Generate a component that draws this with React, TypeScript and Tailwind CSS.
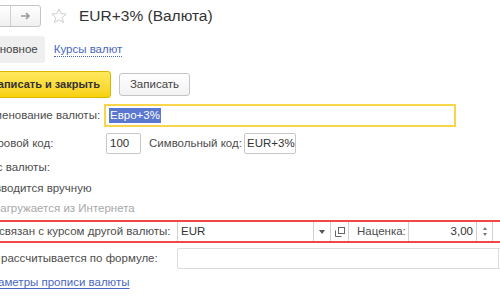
import React from "react";

const font = { fontFamily: '"Liberation Sans", Arial, sans-serif' };

export default function App() {
  return (
    <div className="w-[500px] h-[300px] overflow-hidden bg-white relative text-[11.5px] text-[#4d4d4d] whitespace-nowrap" style={font}>
      <div className="ml-[-20px] w-[540px] flex flex-col">
        {/* title row */}
        <div className="h-[31px] flex items-center pt-[1px]">
          <div className="flex shrink-0 h-[22px] border border-[#c4c4c4] rounded-[3px] bg-gradient-to-b from-white to-[#f0f0f0]">
            <div className="w-[30px] border-r border-[#d0d0d0] flex items-center justify-center text-[#b0b0b0]">←</div>
            <div className="w-[29px] flex items-center justify-center">
              <svg width="12" height="10" viewBox="0 0 12 10">
                <path d="M1 5h8M6 2l3 3-3 3" stroke="#9a9a9a" strokeWidth="1.6" fill="none" />
              </svg>
            </div>
          </div>
          <svg className="ml-[9px] shrink-0" width="18" height="18" viewBox="0 0 24 24">
            <path d="M12 2.5l2.9 6.2 6.6.7-5 4.5 1.4 6.6L12 17.2l-5.9 3.3 1.4-6.6-5-4.5 6.6-.7z" fill="none" stroke="#c8c8c8" strokeWidth="1.2" strokeLinejoin="round" />
          </svg>
          <div className="ml-[11px] text-[15.5px] text-[#333]">EUR+3% (Валюта)</div>
        </div>
        {/* tabs */}
        <div className="mt-[5px] h-[27px] flex items-center">
          <div className="h-[27px] bg-[#efefef] rounded-[3px] pl-[5px] pr-[7px] flex items-center text-[#444]">Основное</div>
          <div className="ml-[9px] text-[#4a67c0] border-b border-dotted border-[#4a67c0] leading-[14px]">Курсы валют</div>
        </div>
        {/* buttons */}
        <div className="mt-[8px] flex items-center h-[27px]">
          <div className="shrink-0 h-[27px] w-[131px] rounded-[3px] border border-[#d9b700] bg-gradient-to-b from-[#ffe95c] to-[#f7d100] flex items-center justify-end pr-[10px] text-[#333] font-bold text-[11px]">Записать и закрыть</div>
          <div className="shrink-0 ml-[8px] h-[23px] w-[71px] rounded-[3px] border border-[#c4c4c4] bg-gradient-to-b from-white to-[#f2f2f2] flex items-center justify-center text-[#444]">Записать</div>
        </div>
        {/* name */}
        <div className="mt-[6px] flex items-center h-[23px] ml-[-7px]">
          <div className="w-[131px] shrink-0">Наименование валюты:</div>
          <div className="shrink-0 w-[352px] h-[23px] border-2 border-[#f9d548] flex items-center pl-[3px]">
            <span className="bg-[#5a78d0] text-white px-[1px] leading-[15px]">Евро+3%</span>
          </div>
        </div>
        {/* codes */}
        <div className="mt-[6px] flex items-center h-[21px] ml-[-7px]">
          <div className="w-[133px] shrink-0">Цифровой код:</div>
          <div className="shrink-0 w-[35px] h-[21px] border border-[#c8c8c8] rounded-[2px] flex items-center pl-[3px] text-[#333]">100</div>
          <div className="shrink-0 ml-[8px] w-[95px]">Символьный код:</div>
          <div className="shrink-0 w-[52px] h-[21px] border border-[#c8c8c8] rounded-[2px] flex items-center pl-[2px] text-[#333]">EUR+3%</div>
        </div>
        {/* rate */}
        <div className="mt-[5px] h-[18px] flex items-center ml-[-2px]">Курс валюты:</div>
        <div className="mt-[2px] h-[20px] flex items-center pl-[15px]">вводится вручную</div>
        <div className="h-[20px] flex items-center pl-[15px] text-[#a8a8a8]">загружается из Интернета</div>
        <div className="mt-[1px] h-[23px] flex items-center border-y-2 border-[#f04848]">
          <div className="w-[197px] shrink-0 pl-[19px]">связан с курсом другой валюты:</div>
          <div className="flex shrink-0 h-[19px] items-stretch">
            <div className="w-[136px] border-l border-[#d0d0d0] flex items-center pl-[3px] text-[#333]">EUR</div>
            <div className="w-[17px] border-l border-[#d0d0d0] flex items-center justify-center">
              <svg width="6" height="4" viewBox="0 0 6 4"><path d="M0 0h6L3 4z" fill="#555" /></svg>
            </div>
            <div className="w-[18px] border-l border-[#d0d0d0] flex items-center justify-center">
              <svg width="10" height="10" viewBox="0 0 10 10">
                <rect x="3.5" y="0.5" width="6" height="6" fill="none" stroke="#666" />
                <path d="M0.5 3.5v6h6" fill="none" stroke="#666" />
              </svg>
            </div>
            <div className="w-[60px] border-l border-[#d0d0d0] flex items-center pl-[8px]">Наценка:</div>
            <div className="w-[68px] border-l border-[#d0d0d0] flex items-center justify-end pr-[3px] text-[#333]">3,00</div>
            <div className="w-[17px] border-x border-[#d0d0d0] flex flex-col items-center justify-center gap-[3px]">
              <svg width="4" height="3" viewBox="0 0 4 3"><path d="M0 3h4L2 0z" fill="#777" /></svg>
              <svg width="4" height="3" viewBox="0 0 4 3"><path d="M0 0h4L2 3z" fill="#777" /></svg>
            </div>
          </div>
        </div>
        <div className="mt-[5px] h-[21px] flex items-center">
          <div className="w-[197px] shrink-0 pl-[21px]">рассчитывается по формуле:</div>
          <div className="shrink-0 w-[340px] h-[21px] border border-[#dcdcdc] rounded-[2px] flex justify-end">
            <div className="w-[18px] border-l border-[#dcdcdc] text-[#777] flex items-end justify-center pb-[3px] leading-none">...</div>
          </div>
        </div>
        <div className="mt-[5px] h-[18px] flex items-center ml-[-3px]">
          <span className="text-[#4a67c0] underline underline-offset-2">Параметры прописи валюты</span>
        </div>
      </div>
    </div>
  );
}
